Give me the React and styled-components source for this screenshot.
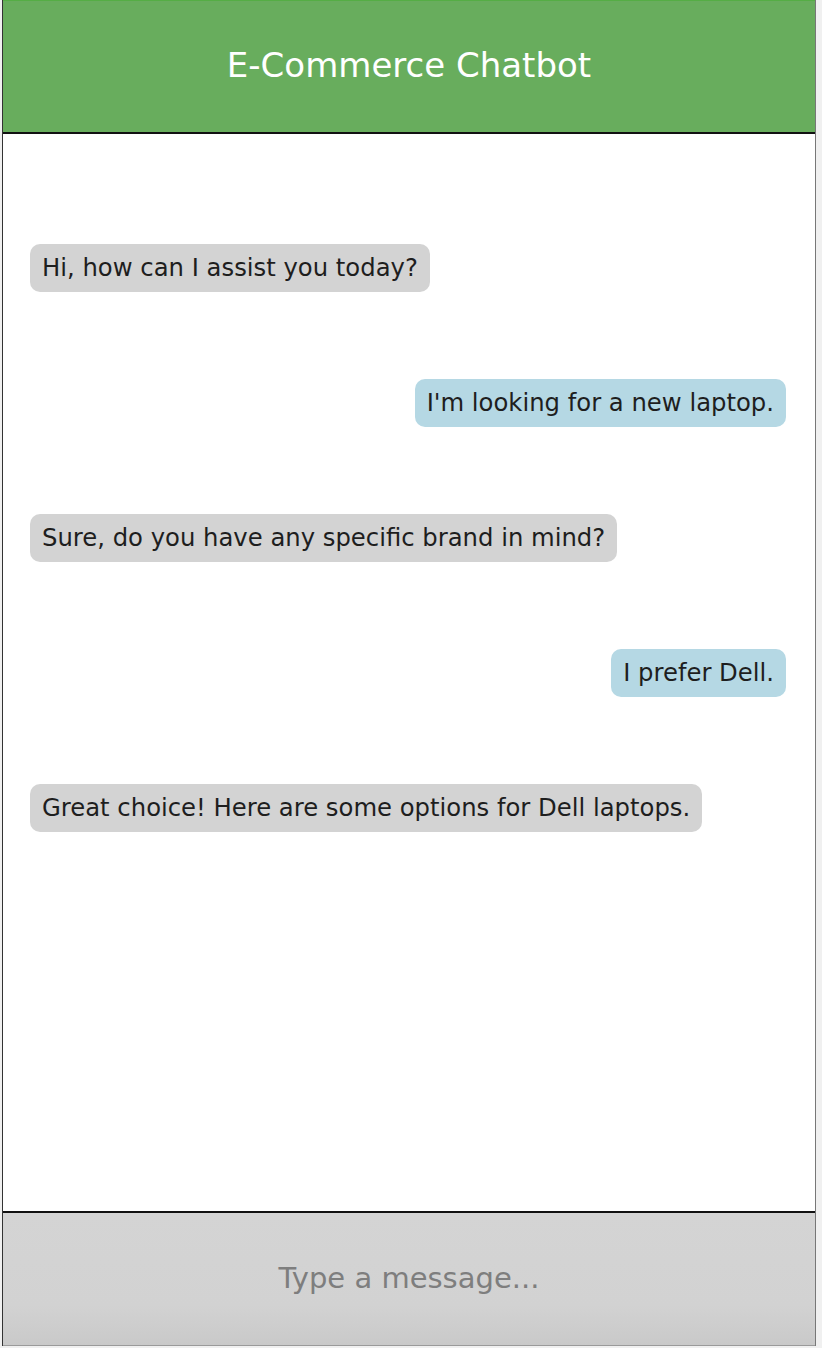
import React from "react";
import styled, { createGlobalStyle } from "styled-components";

const Global = createGlobalStyle`
  html, body { margin: 0; padding: 0; background: #f0f0f0; }
  body { font-family: "DejaVu Sans", "Liberation Sans", sans-serif; }
  * { box-sizing: border-box; }
`;

const Shell = styled.div`
  margin-left: 2px;
  width: 814px;
  height: 1346px;
  display: flex;
  flex-direction: column;
  background: #ffffff;
  border-left: 1px solid #333333;
  border-right: 1px solid #777777;
`;

const Header = styled.header`
  height: 134px;
  flex: none;
  display: flex;
  align-items: center;
  justify-content: center;
  padding-bottom: 4px;
  background: #68ad5d;
  border-top: 1px solid #55ad45;
  border-bottom: 2px solid #111111;
  color: #ffffff;
  font-size: 34px;
  font-weight: normal;
`;

const Messages = styled.main`
  flex: 1;
  display: flex;
  flex-direction: column;
  gap: 86.5px;
  padding: 110px 29px 0 27px;
  overflow: hidden;
`;

const Row = styled.div`
  display: flex;
  justify-content: ${(p) => (p.$user ? "flex-end" : "flex-start")};
`;

const Bubble = styled.div`
  padding: 10px 12px;
  border-radius: 10px;
  font-size: 24.3px;
  line-height: 28.4px;
  color: #1e1e1e;
  background: ${(p) => (p.$user ? "#b5d8e4" : "#d3d3d3")};
`;

const Footer = styled.footer`
  height: 135px;
  flex: none;
  border-top: 2px solid #111111;
  border-bottom: 1px solid #9a9a9a;
  background: linear-gradient(#d4d4d4, #d2d2d2 70%, #c9c9c9);
  display: flex;
`;

const Input = styled.input`
  flex: 1;
  border: none;
  outline: none;
  background: transparent;
  text-align: center;
  font-family: "DejaVu Sans", sans-serif;
  font-size: 29px;
  color: #333;
  padding: 0 0 2px;
  &::placeholder { color: #7e7e7e; }
`;

const messages = [
  { user: false, text: "Hi, how can I assist you today?" },
  { user: true, text: "I'm looking for a new laptop." },
  { user: false, text: "Sure, do you have any specific brand in mind?" },
  { user: true, text: "I prefer Dell." },
  { user: false, text: "Great choice! Here are some options for Dell laptops." },
];

export default function App() {
  return (
    <>
      <Global />
      <Shell>
        <Header>E-Commerce Chatbot</Header>
        <Messages>
          {messages.map((m, i) => (
            <Row key={i} $user={m.user}>
              <Bubble $user={m.user}>{m.text}</Bubble>
            </Row>
          ))}
        </Messages>
        <Footer>
          <Input placeholder="Type a message..." />
        </Footer>
      </Shell>
    </>
  );
}
